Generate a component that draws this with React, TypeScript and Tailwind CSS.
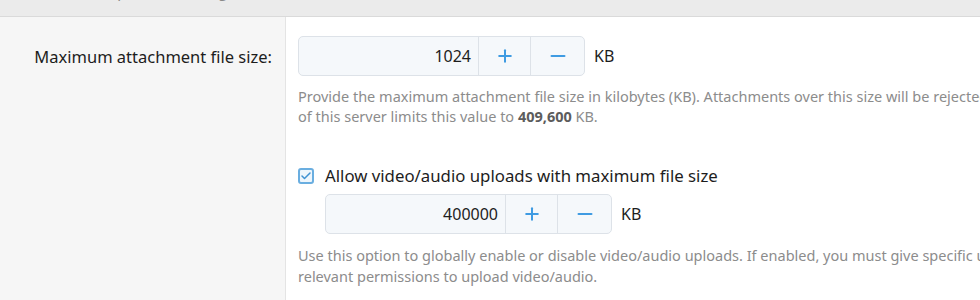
import { Check, Minus, Plus } from "lucide-react"

const font = { fontFamily: '"Noto Sans", "Open Sans", Arial, sans-serif' }

const Spinner = ({ value }: { value: string }) => {
    return (
        <div className="flex items-center">
            <div className="flex h-[40px] rounded-[5px] border border-[#dde2e8] bg-[#f5f8fb] overflow-hidden">
                <div className="flex w-[179px] items-center justify-end pr-[7px] text-[16px] text-[#1d1d1d]">{value}</div>
                <button className="flex w-[52px] items-center justify-center border-l border-[#dde2e8] text-[#3f9be2]">
                    <Plus size={20} strokeWidth={2.4} />
                </button>
                <button className="flex w-[54px] items-center justify-center border-l border-[#dde2e8] text-[#3f9be2]">
                    <Minus size={22} strokeWidth={2.4} />
                </button>
            </div>
            <span className="ml-[9px] text-[16px] text-[#1d1d1d]">KB</span>
        </div>
    )
}

const App = () => {
    return (
        <div className="w-[980px] h-[300px] overflow-hidden bg-white" style={font}>
            <div className="h-[17px] border-b border-[#dadada] bg-[#ebebeb] overflow-hidden">
                <p className="mt-[-20px] pl-[35px] text-[15px] text-[#8a8a8a] whitespace-nowrap">
                    Use these options to configure how attachments are handled on the site
                </p>
            </div>
            <div className="flex w-[1400px] h-[283px]">
                <div className="w-[286px] shrink-0 border-r border-[#e4e4e4] bg-[#f6f6f6]">
                    <div className="flex h-[40px] mt-[20px] items-center justify-end pr-[13px] text-[16.5px] text-[#1d1d1d]">
                        Maximum attachment file size:
                    </div>
                </div>
                <div className="flex flex-col pl-[12px] pt-[19px]">
                    <Spinner value="1024" />
                    <div className="mt-[10px] text-[14.5px] leading-[20px] text-[#8c8c8c] whitespace-nowrap">
                        <p>Provide the maximum attachment file size in kilobytes (KB). Attachments over this size will be rejected. The configuration</p>
                        <p>of this server limits this value to <b className="text-[#5c5c5c]">409,600</b> KB.</p>
                    </div>
                    <label className="mt-[37px] flex items-center gap-[11px] text-[16.8px] text-[#1d1d1d]">
                        <span className="flex h-[16px] w-[16px] items-center justify-center rounded-[3px] border-2 border-[#6aaee0] bg-[#eef6fc] text-[#3f92d2]">
                            <Check size={12} strokeWidth={3} />
                        </span>
                        Allow video/audio uploads with maximum file size
                    </label>
                    <div className="mt-[6px] pl-[27px]">
                        <Spinner value="400000" />
                    </div>
                    <div className="mt-[11px] text-[14.5px] leading-[21px] text-[#8c8c8c] whitespace-nowrap">
                        <p>Use this option to globally enable or disable video/audio uploads. If enabled, you must give specific usergroups the</p>
                        <p>relevant permissions to upload video/audio.</p>
                    </div>
                </div>
            </div>
        </div>
    )
}

export default App
